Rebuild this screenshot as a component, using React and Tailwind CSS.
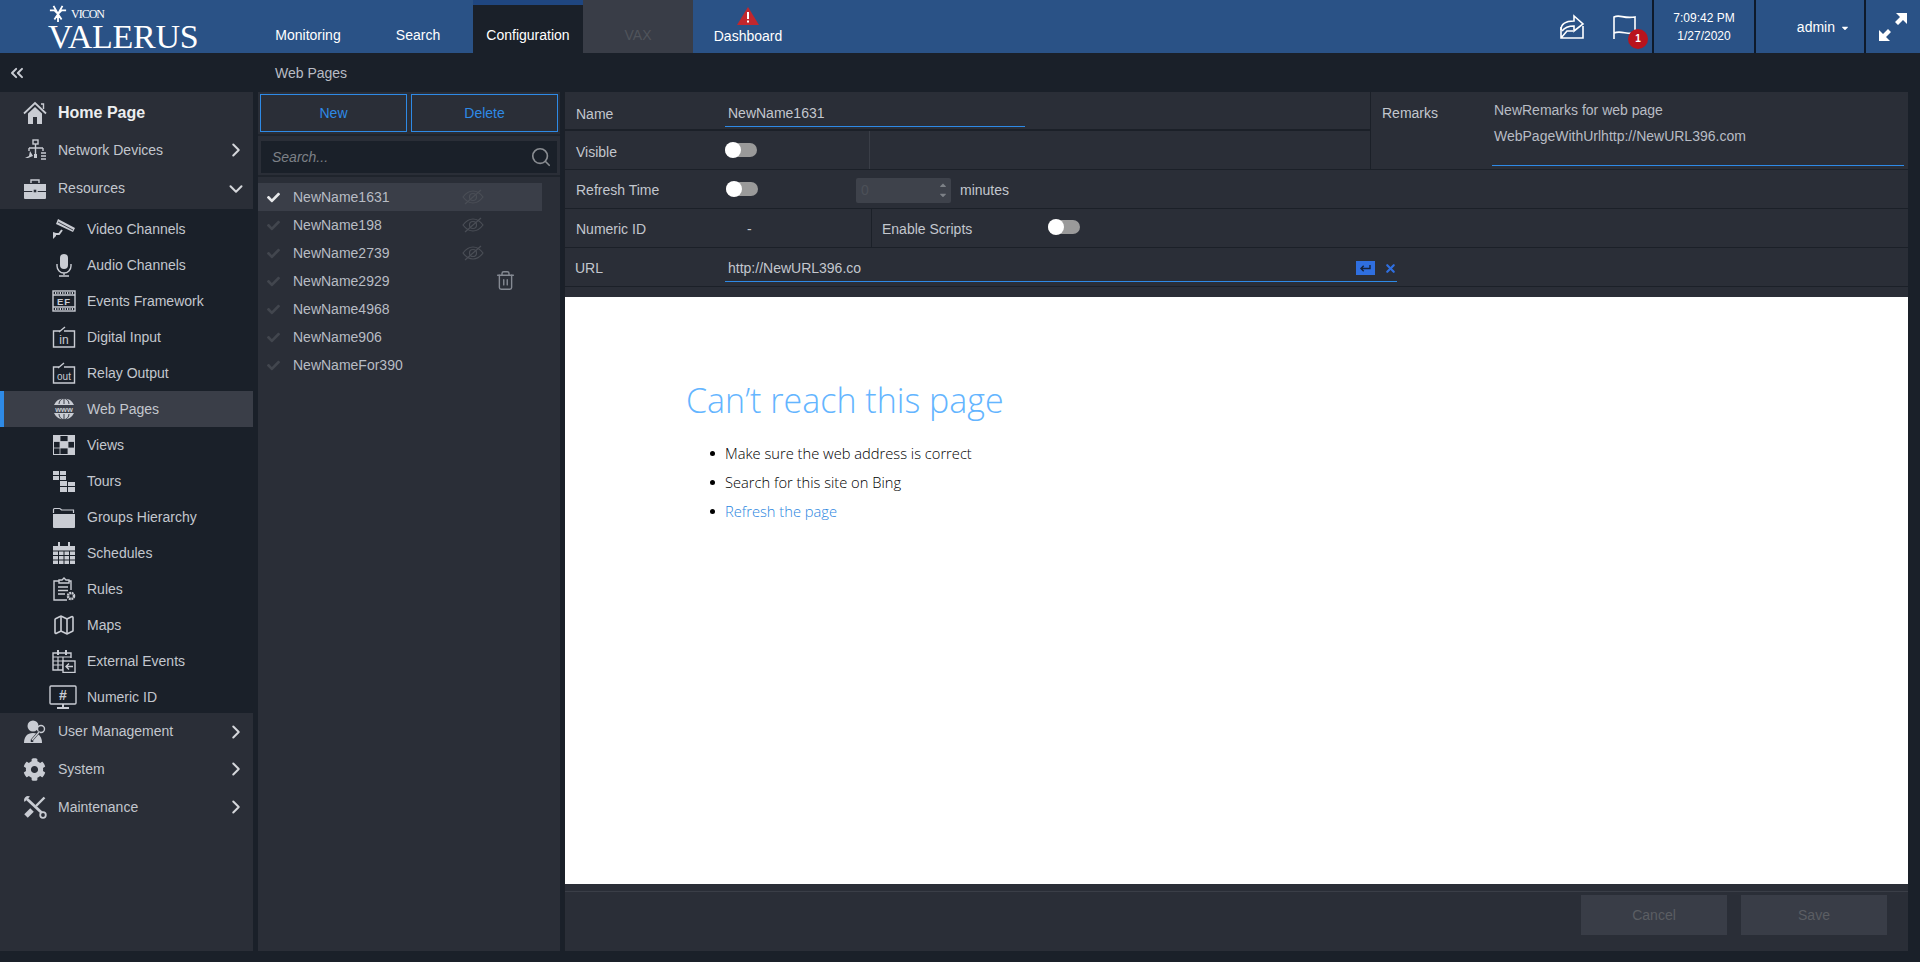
import { ChevronRight, ChevronDown, ChevronsLeft, Search, Trash2, X, Map as MapIcon } from "lucide-react";
import { FaCheck, FaCog, FaCaretDown, FaCaretUp } from "react-icons/fa";

function Ico({ children, className = "w-[24px] h-[24px]", box = "0 0 24 24" }) {
  return (
    <svg viewBox={box} className={className} fill="none" stroke="currentColor" strokeWidth="1.4">
      {children}
    </svg>
  );
}

const HomeIcon = () => (
  <Ico>
    <path d="M5 12.500V23h5v-7h4v7h5V12.500L12 6z" fill="currentColor" stroke="none" />
    <path d="M1 12.500L12 2l11 10.500" strokeWidth="1.800" />
    <path d="M18 3h2.500v5" strokeWidth="1.400" />
  </Ico>
);
const NetworkIcon = () => (
  <Ico>
    <rect x="10" y="2" width="5" height="4" />
    <path d="M12.500 6v14M6 10h14M6 10v3M20 10v3" />
    <path d="M2 20l4-2 1-5 3 5-5 2z" fill="currentColor" stroke="none" />
    <path d="M18 15h5M18 18h5M18 21h5" strokeWidth="1.600" />
    <path d="M12.500 16v4" strokeWidth="3" />
  </Ico>
);
const ToolboxIcon = () => (
  <Ico>
    <path d="M8 6V3h8v3" />
    <path d="M1 7h22v7H1zM1 15h22v6a1 1 0 0 1-1 1H2a1 1 0 0 1-1-1z" fill="currentColor" stroke="none" />
    <rect x="10" y="12" width="4" height="4" fill="#2a2e37" stroke="currentColor" />
  </Ico>
);
const CameraIcon = () => (
  <Ico>
    <path d="M6 2l17 9-2 4L4 7z" fill="currentColor" stroke="none" />
    <path d="M6 5l15 8" stroke="#1a2029" strokeWidth="0.800" />
    <path d="M10 13l-3 4H2" strokeWidth="2" />
    <path d="M1 15v7l3-3v-3z" fill="currentColor" stroke="none" />
  </Ico>
);
const MicIcon = () => (
  <Ico>
    <rect x="8" y="1" width="8" height="15" rx="4" fill="currentColor" stroke="none" />
    <path d="M5 11v2a7 7 0 0 0 14 0v-2M12 20v2M7 23h10" />
  </Ico>
);
const EfIcon = () => (
  <Ico>
    <rect x="1" y="2" width="22" height="20" />
    <path d="M1 6h22M1 18h22" />
    <path d="M3 4h18M3 20h18" strokeDasharray="1.200 1.200" strokeWidth="2" />
    <text x="12" y="15.500" textAnchor="middle" fontSize="9.500" fontWeight="700" fill="currentColor" stroke="none" letterSpacing="1" fontFamily="Liberation Sans">EF</text>
  </Ico>
);
const InIcon = () => (
  <Ico>
    <path d="M8 6H1.500v16h21V6H12" />
    <path d="M7 7l6-5" />
    <text x="12" y="19" textAnchor="middle" fontSize="12" fill="currentColor" stroke="none" fontFamily="Liberation Sans">in</text>
  </Ico>
);
const OutIcon = () => (
  <Ico>
    <path d="M7 6H1.500v16h21V6H12" />
    <path d="M6 7l6-5" />
    <text x="12" y="18.500" textAnchor="middle" fontSize="10" fill="currentColor" stroke="none" fontFamily="Liberation Sans">out</text>
  </Ico>
);
const GlobeIcon = () => (
  <Ico>
    <path d="M2 8a11 11 0 0 1 20 0zM2 16a11 11 0 0 0 20 0z" fill="currentColor" stroke="none" />
    <path d="M12 1v6M7 7c0-3 2-5 5-6 3 1 5 3 5 6" stroke="#3a3e48" strokeWidth="1" />
    <path d="M7 17c0 3 2 5 5 6 3-1 5-3 5-6M12 17v6" stroke="#3a3e48" strokeWidth="1" />
    <text x="12" y="14.500" textAnchor="middle" fontSize="7.500" fontWeight="700" fill="currentColor" stroke="none" fontFamily="Liberation Sans">www</text>
  </Ico>
);
const ViewsIcon = () => (
  <Ico>
    <rect x="1.500" y="2.500" width="21" height="19" strokeWidth="1" />
    <path d="M1 2h7v6.500H1zM8 8.500h8V15H8zM16 15h7v7h-7zM16 2h7v6.500h-7z" fill="currentColor" stroke="none" />
    <path d="M8 2v20M16 2v20M1 8.500h22M1 15h22" strokeWidth="0.800" />
  </Ico>
);
const ToursIcon = () => (
  <Ico>
    <path d="M1 2h6v4H1zM8 2h6v4H8zM1 7h6v4H1zM8 7h6v4H8zM8 12h7v5H8zM8 18h7v5H8zM16 13h7v4h-7zM16 18h7v5h-7z" fill="currentColor" stroke="none" />
  </Ico>
);
const FolderIcon = () => (
  <Ico>
    <path d="M1.500 8V4.500c0-.5.300-1 1-1h5c1 0 1.500 1.500 2.500 1.500h11.500v3" strokeWidth="1.200" />
    <path d="M1 9h22v13a1 1 0 0 1-1 1H2a1 1 0 0 1-1-1z" fill="currentColor" stroke="none" />
  </Ico>
);
const CalendarIcon = () => (
  <Ico>
    <path d="M1 5h22v18H1z" fill="currentColor" stroke="none" />
    <path d="M7 1v6M17 1v6" strokeWidth="2" />
    <path d="M1 10h22M1 14.500h22M1 19h22M6.500 10v13M12 10v13M17.500 10v13" stroke="#1a2029" strokeWidth="1" />
  </Ico>
);
const RulesIcon = () => (
  <Ico>
    <path d="M7 4H2v19h13" />
    <path d="M17 4h2v9" />
    <path d="M7 5V3h3l2-2 2 2h3v3H7z" />
    <path d="M6 10h10M6 13.500h10M6 17h7" />
    <circle cx="19" cy="19" r="3" strokeWidth="2.500" strokeDasharray="1.800 0.600" />
  </Ico>
);
const ExternalIcon = () => (
  <Ico>
    <path d="M19 9V4H1v17h11" />
    <path d="M6 1v5M14 1v5" strokeWidth="2" />
    <path d="M1 8h18M1 12h11M1 16h11M6 8v13M11 8v13" strokeWidth="1.200" />
    <rect x="11" y="12" width="12" height="11.500" fill="#1a2029" />
    <path d="M21 17.500h-7M17 14.500l-3 3 3 3" />
  </Ico>
);
const MonitorIcon = () => (
  <svg viewBox="0 0 28 24" className="w-[28px] h-[24px] -ml-[3px]" fill="none" stroke="currentColor" strokeWidth="1.400">
    <rect x="1" y="1" width="26" height="18" rx="1" />
    <path d="M14 19v3M8 23h12" strokeWidth="2" />
    <text x="14" y="15" textAnchor="middle" fontSize="14" fontWeight="700" fill="currentColor" stroke="none" fontFamily="Liberation Sans">#</text>
  </svg>
);
const UserKeyIcon = () => (
  <Ico>
    <circle cx="10" cy="6" r="5.500" fill="currentColor" stroke="none" />
    <path d="M1 23c0-6 3-10 9-10s9 4 9 10z" fill="currentColor" stroke="none" />
    <circle cx="18" cy="9" r="3.500" fill="#2a2e37" stroke="currentColor" />
    <path d="M16 12l-7 8v2" stroke="#2a2e37" strokeWidth="2.500" />
    <path d="M16 12l-7 8" />
  </Ico>
);
const ToolsIcon = () => (
  <Ico>
    <path d="M4 4l15 14" strokeWidth="2.800" />
    <path d="M1.500 7L7 1.500 5 1C3 1 1 3 1 5z" fill="currentColor" stroke="none" />
    <circle cx="20" cy="20" r="2.800" strokeWidth="1.800" fill="#2a2e37" />
    <path d="M21.500 2.500L13 11" strokeWidth="2.400" />
    <path d="M9 15l-6 6" strokeWidth="5" />
  </Ico>
);

const subItems = [
  ["Video Channels", CameraIcon],
  ["Audio Channels", MicIcon],
  ["Events Framework", EfIcon],
  ["Digital Input", InIcon],
  ["Relay Output", OutIcon],
  ["Web Pages", GlobeIcon],
  ["Views", ViewsIcon],
  ["Tours", ToursIcon],
  ["Groups Hierarchy", FolderIcon],
  ["Schedules", CalendarIcon],
  ["Rules", RulesIcon],
  ["Maps", () => <MapIcon className="w-[24px] h-[24px]" strokeWidth={1.6} />],
  ["External Events", ExternalIcon],
  ["Numeric ID", MonitorIcon],
];

function TopNav({ label, icon, open, h = "h-[38px]" }) {
  return (
    <div className={`flex items-center pl-[23px] pr-[6px] text-[14px] text-[#c3c7ce] ${h}`}>
      <span className="w-[35px] flex text-[#c9ccd3]">{icon}</span>
      <span className="flex-1">{label}</span>
      {open ? (
        <ChevronDown className="w-[22px] h-[22px] text-[#d5d7db]" strokeWidth={2.2} />
      ) : (
        <ChevronRight className="w-[22px] h-[22px] text-[#d5d7db]" strokeWidth={2.2} />
      )}
    </div>
  );
}

function Sidebar() {
  return (
    <aside className="w-[253px] flex flex-col">
      <div className="bg-[#2a2e37]">
        <div className="flex items-center h-[39px] pt-[3px] pl-[23px] text-[16px] font-bold text-[#eceef0]">
          <span className="w-[35px] flex text-[#c9ccd3]">
            <HomeIcon />
          </span>
          Home Page
        </div>
        <TopNav label="Network Devices" icon={<NetworkIcon />} />
        <TopNav label="Resources" icon={<ToolboxIcon />} open h="h-[39px] mb-[1px]" />
      </div>
      <div className="flex flex-col h-[504px] pt-[2px]">
        {subItems.map(([label, Icon]) => {
          const active = label === "Web Pages";
          return (
            <div
              key={label}
              className={`h-[36px] shrink-0 flex items-center text-[14px] text-[#c3c7ce] ${
                active ? "bg-[#3a3e48] border-l-4 border-[#2e8ae6] pl-[48px]" : "pl-[52px]"
              }`}
            >
              <span className="w-[35px] flex justify-start text-[#c9ccd3]">
                <Icon />
              </span>
              {label}
            </div>
          );
        })}
      </div>
      <div className="bg-[#2a2e37] flex-1">
        <TopNav label="User Management" icon={<UserKeyIcon />} h="h-[37px]" />
        <TopNav label="System" icon={<FaCog className="w-[23px] h-[23px]" />} />
        <TopNav label="Maintenance" icon={<ToolsIcon />} />
      </div>
    </aside>
  );
}

function EyeOff() {
  return (
    <svg viewBox="0 0 22 16" className="w-[22px] h-[16px] text-[#4a4e56]" fill="none" stroke="currentColor" strokeWidth="1.200">
      <path d="M1 8c3-4 6-6 10-6s7 2 10 6c-3 4-6 6-10 6S4 12 1 8z" />
      <circle cx="11" cy="8" r="3.500" />
      <path d="M3 15L19 1" />
    </svg>
  );
}

const pages = ["NewName1631", "NewName198", "NewName2739", "NewName2929", "NewName4968", "NewName906", "NewNameFor390"];

function ListPanel() {
  return (
    <section className="w-[302px] ml-[5px] bg-[#2a2e37] flex flex-col">
      <div className="flex gap-[4px] px-[2px] pt-[2px] h-[44px] border-b-2 border-[#1f242c]">
        {["New", "Delete"].map((t) => (
          <button key={t} className="h-[38px] w-[147px] border border-[#2e8ae6] text-[14px] text-[#2e8ae6]">
            {t}
          </button>
        ))}
      </div>
      <div className="h-[41px] pt-[5px] px-[3px] border-b-2 border-[#1f242c] flex-none">
        <div className="h-[32px] bg-[#1a2029] flex items-center justify-between pl-[11px] pr-[5px]">
          <span className="text-[14px] italic text-[#7d8187]">Search...</span>
          <Search className="w-[22px] h-[22px] text-[#8a8d92]" strokeWidth={1.8} />
        </div>
      </div>
      <ul className="pt-[6px]">
        {pages.map((p, i) => (
          <li
            key={p}
            className={`h-[28px] w-[284px] flex items-center text-[14px] text-[#b8bcc4] ${i === 0 ? "bg-[#3a3e48]" : ""}`}
          >
            <FaCheck className={`w-[13px] h-[13px] ml-[9px] mr-[13px] ${i === 0 ? "text-[#e8e9eb]" : "text-[#42464e]"}`} />
            <span className="w-[169px]">{p}</span>
            {i < 3 && <EyeOff />}
            {i === 3 && <Trash2 className="w-[21px] h-[21px] ml-[33px] -mt-[1px] text-[#858a93]" strokeWidth={1.6} />}
          </li>
        ))}
      </ul>
    </section>
  );
}

function Toggle() {
  return (
    <span className="relative block w-[32px] h-[14px] rounded-full bg-[#9a9a9a]">
      <span className="absolute left-0 top-[-1px] w-[16px] h-[16px] rounded-full bg-white" />
    </span>
  );
}

const rowLine = "border-b border-[#1b2028] h-[39px] flex items-center text-[14px] text-[#c3c7ce]";

function DetailPanel() {
  return (
    <section className="flex-1 ml-[4px] mr-[12px] flex flex-col bg-[#2a2e37] text-[14px] border-l border-[#1b2028]">
      <div className="flex h-[78px] border-b border-[#1b2028]">
        <div className="w-[806px] border-r border-[#1b2028]">
          <div className="h-[39px] border-b-2 border-[#1b2028] flex items-start pl-[11px] text-[#c3c7ce]">
            <span className="w-[149px] pt-[12px]">Name</span>
            <span className="w-[300px] h-[35px] pl-[3px] pt-[11px] border-b border-[#2e8ae6]">NewName1631</span>
          </div>
          <div className="h-[38px] flex items-center pt-[5px] pl-[11px] text-[#c3c7ce]">
            <span className="w-[149px]">Visible</span>
            <span className="w-[144px] -mt-[5px]">
              <Toggle />
            </span>
            <span className="self-stretch -mt-[5px] border-l border-[#3a3e47]" />
          </div>
        </div>
        <div className="flex-1 flex text-[#c3c7ce] pl-[11px] pr-[4px]">
          <span className="w-[110px] pt-[11px]">Remarks</span>
          <div className="flex-1 h-[74px] border-b border-[#2e8ae6] pl-[2px] pt-[5px] leading-[26px] text-[#b8bcc4]">
            <div>NewRemarks for web page</div>
            <div>WebPageWithUrlhttp://NewURL396.com</div>
          </div>
        </div>
      </div>
      <div className={`${rowLine} pl-[11px] pt-[2px]`}>
        <span className="w-[150px]">Refresh Time</span>
        <span className="w-[130px] -mt-[3px]">
          <Toggle />
        </span>
        <span className="w-[95px] h-[25px] rounded-[2px] bg-[#3e424b] flex items-center justify-between pl-[5px] pr-[3px] text-[#4c5058]">
          0
          <span className="flex flex-col text-[#7d8187] text-[10px] leading-[10px]">
            <FaCaretUp />
            <FaCaretDown />
          </span>
        </span>
        <span className="ml-[9px]">minutes</span>
      </div>
      <div className={`${rowLine} pl-[11px] pt-[2px]`}>
        <span className="w-[171px]">Numeric ID</span>
        <span className="w-[124px]">-</span>
        <span className="self-stretch -mt-[2px] border-l border-[#1b2028]" />
        <span className="w-[176px] pl-[10px]">Enable Scripts</span>
        <span className="-mt-[4px]">
          <Toggle />
        </span>
      </div>
      <div className={`${rowLine} pl-[10px] pt-[3px]`}>
        <span className="w-[150px]">URL</span>
        <div className="w-[672px] h-[29px] mb-[2px] pt-[2px] flex items-center justify-between border-b border-[#2e8ae6] pl-[3px] text-[#c3c7ce]">
          <span>http://NewURL396.co</span>
          <span className="flex items-center gap-[9px]">
            <span className="w-[19px] h-[14px] bg-[#2f6fe0] flex items-center justify-center">
              <svg viewBox="0 0 14 10" className="w-[13px] h-[9px]" fill="none" stroke="#16233c" strokeWidth="1.600">
                <path d="M12 1v4H2M5 2L2 5l3 3" />
              </svg>
            </span>
            <X className="w-[13px] h-[13px] text-[#2f6fe0]" strokeWidth={4} />
          </span>
        </div>
      </div>
      <div className="h-[10px] shrink-0" />
      <div className="h-[587px] shrink-0 bg-white pl-[121px] pt-[80px] font-['Open_Sans',sans-serif]">
        <h1 className="text-[34px] leading-[46px] font-light text-[#64b5ff]">Can’t reach this page</h1>
        <ul className="mt-[16px] text-[14.7px] text-black font-light">
          {["Make sure the web address is correct", "Search for this site on Bing", "Refresh the page"].map((t, i) => (
            <li key={t} className="h-[29px] flex items-center">
              <span className="w-[5px] h-[5px] rounded-full bg-black mr-[10px] ml-[24px]" />
              <span className={i === 2 ? "text-[#2a86e0]" : ""}>{t}</span>
            </li>
          ))}
        </ul>
      </div>
      <div className="flex-1 flex flex-col">
        <div className="h-[8px] border-b border-[#3a3e47]" />
        <div className="flex justify-end gap-[14px] pr-[21px] pt-[3px]">
          {["Cancel", "Save"].map((t) => (
            <button key={t} className="w-[146px] h-[40px] bg-[#393d47] text-[14px] text-[#5b5e63]">
              {t}
            </button>
          ))}
        </div>
      </div>
    </section>
  );
}

function Logo() {
  return (
    <div className="w-[253px] h-[53px] pl-[48px] pt-[4px] text-white font-['Liberation_Serif',serif]">
      <div className="flex items-center h-[19px]">
        <svg viewBox="0 0 20 20" className="w-[20px] h-[18px]" fill="none" stroke="white" strokeWidth="2">
          <path d="M5 1l5 9 5-9M1 6h5l4 4 4-4h5M10 10v9M6 16l4-6 4 6" />
        </svg>
        <span className="ml-[3px] text-[12px] leading-none tracking-[-1px]">VICON</span>
      </div>
      <div className="text-[34px] leading-[27px] tracking-[-0.3px]">VALERUS</div>
    </div>
  );
}

function Tab({ children, className = "text-white" }) {
  return <div className={`w-[110px] h-[53px] flex flex-col justify-end items-center pb-[7px] text-[14px] ${className}`}>{children}</div>;
}

function Header() {
  return (
    <header className="h-[53px] bg-[#2a5286] flex">
      <Logo />
      <Tab>Monitoring</Tab>
      <Tab>Search</Tab>
      <div className="w-[110px] h-[53px] pt-[1px] bg-[#1f4680]">
        <div className="h-[48px] mt-[4px] bg-[#1a2029] text-white text-[14px] flex items-end justify-center pb-[7px]">
          Configuration
        </div>
      </div>
      <Tab className="bg-[#393d47] text-[#50545b]">VAX</Tab>
      <div className="w-[110px] h-[53px] flex flex-col justify-end items-center pb-[6px] text-[14px] text-white">
        <svg viewBox="0 0 22 18" className="w-[22px] h-[18px] mb-[1px]">
          <path d="M11 0l11 18H0z" fill="#c1272d" />
          <path d="M10 5h2v7h-2zM10 13.500h2v2h-2z" fill="white" />
        </svg>
        Dashboard
      </div>
      <div className="flex-1 flex justify-end items-center">
        <svg viewBox="0 0 26 26" className="w-[26px] h-[26px] text-white" fill="none" stroke="currentColor" strokeWidth="1.600">
          <path d="M2 13v11h22V12M2 24l6-7h6" />
          <path d="M2 16c0-6 5-9 13-9V2l9 8-9 7v-5c-5 0-9 1-12 5" />
        </svg>
        <span className="relative ml-[27px] mr-[15px] w-[25px] h-[26px]">
          <svg viewBox="0 0 25 26" className="w-[25px] h-[26px] text-white" fill="none" stroke="currentColor" strokeWidth="1.600">
            <path d="M2 25V3c6-3 9 2 21 0v16c-8 2-14-3-21 0" />
          </svg>
          <span className="absolute left-[16px] top-[15px] w-[20px] h-[20px] rounded-full bg-[#b9141d] text-white text-[10px] font-bold flex items-center justify-center">
            1
          </span>
        </span>
      </div>
      <div className="w-[102px] border-l-2 border-[#0e1a2b] text-white text-[12px] leading-[18px] flex flex-col items-center justify-center pt-[1px]">
        <span>7:09:42 PM</span>
        <span>1/27/2020</span>
      </div>
      <div className="w-[110px] border-l-2 border-[#0e1a2b] text-white text-[14px] flex items-center justify-end pr-[14px] pt-[2px]">
        admin
        <FaCaretDown className="w-[10px] h-[10px] ml-[5px]" />
      </div>
      <div className="w-[56px] border-l-2 border-[#0e1a2b] flex items-center justify-center text-white pr-[1px]">
        <svg viewBox="0 0 30 30" className="w-[30px] h-[30px]" fill="currentColor">
          <path d="M18 1h11v11l-4-4-5 5-3-3 5-5zM1 29V18l4 4 5-5 3 3-5 5 4 4z" />
        </svg>
      </div>
    </header>
  );
}

export default function App() {
  return (
    <div className="h-[962px] bg-[#1a2029] font-['Liberation_Sans',Arial,sans-serif] flex flex-col overflow-hidden">
      <Header />
      <div className="h-[39px] pt-[2px] flex items-center shrink-0">
        <ChevronsLeft className="ml-[7px] -mt-[2px] w-[20px] h-[20px] text-[#c9ccd3]" strokeWidth={2.4} />
        <span className="ml-[248px] text-[14px] text-[#b8bcc4]">Web Pages</span>
      </div>
      <div className="h-[859px] flex">
        <Sidebar />
        <ListPanel />
        <DetailPanel />
      </div>
    </div>
  );
}
